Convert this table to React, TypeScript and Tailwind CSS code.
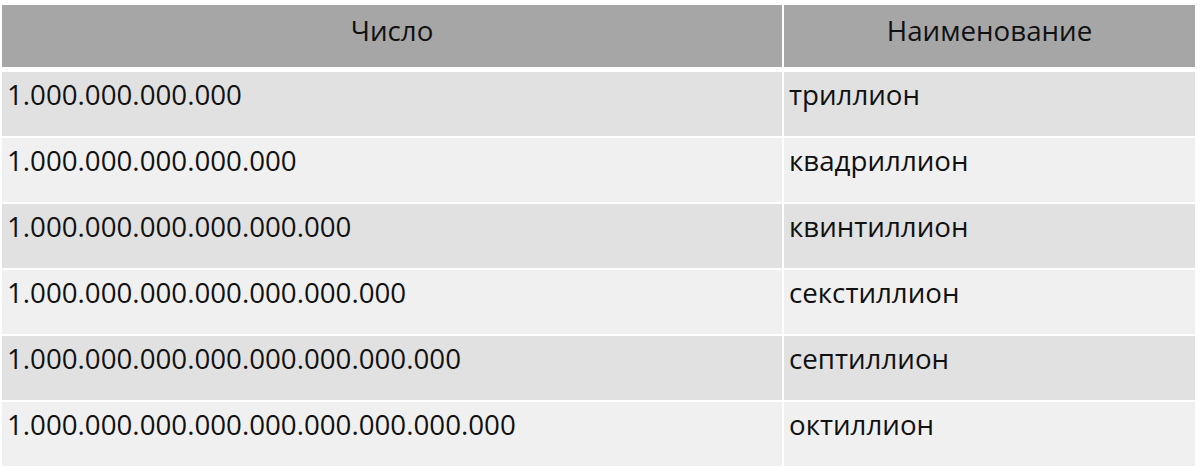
const rows: [string, string][] = [
  ['1.000.000.000.000', 'триллион'],
  ['1.000.000.000.000.000', 'квадриллион'],
  ['1.000.000.000.000.000.000', 'квинтиллион'],
  ['1.000.000.000.000.000.000.000', 'секстиллион'],
  ['1.000.000.000.000.000.000.000.000', 'септиллион'],
  ['1.000.000.000.000.000.000.000.000.000', 'октиллион'],
];

export default function App() {
  return (
    <div
      className="h-[467px] w-[1200px] overflow-hidden bg-white pl-[2px] pr-[5px] pt-[5px] text-[27.7px] leading-[32px] text-[#111]"
      style={{ fontFamily: '"Open Sans", "Liberation Sans", sans-serif' }}
    >
      {/* header */}
      <div className="grid h-[62px] grid-cols-[780px_1fr] gap-x-[2px]">
        <div className="bg-[#a6a6a6] pt-[9px] text-center">Число</div>
        <div className="bg-[#a6a6a6] pt-[9px] text-center">Наименование</div>
      </div>

      {/* body */}
      <div className="mt-[5px] flex flex-col gap-[2px]">
        {rows.map(([num, name], i) => (
          <div key={num} className="grid h-[64px] grid-cols-[780px_1fr] gap-x-[2px]">
            <div className={`${i % 2 === 0 ? 'bg-[#e1e1e1]' : 'bg-[#f0f0f0]'} pl-[5px] pt-[6px]`}>{num}</div>
            <div className={`${i % 2 === 0 ? 'bg-[#e1e1e1]' : 'bg-[#f0f0f0]'} pl-[5px] pt-[6px]`}>{name}</div>
          </div>
        ))}
      </div>
    </div>
  );
}
